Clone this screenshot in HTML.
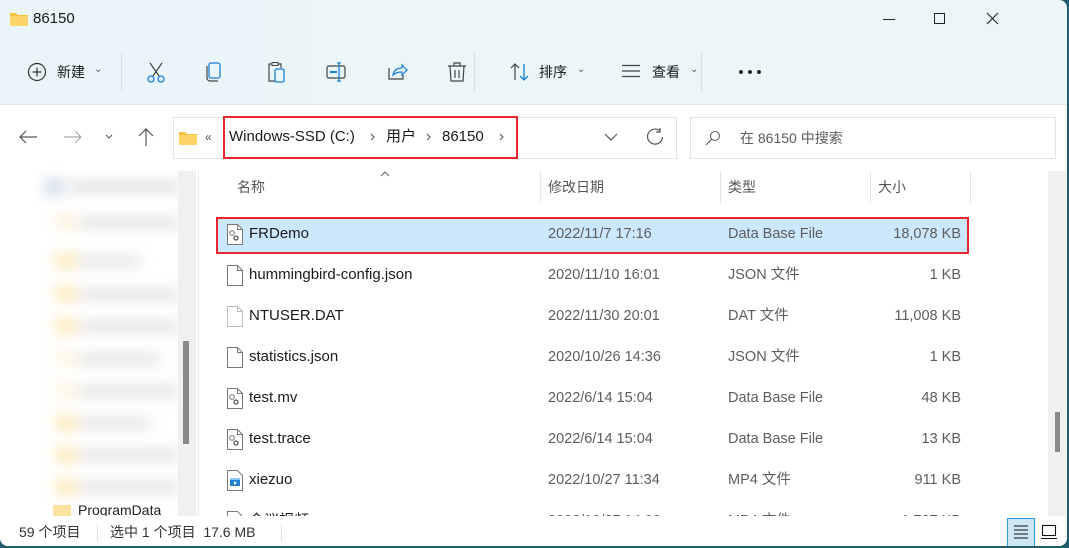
<!DOCTYPE html>
<html><head><meta charset="utf-8"><style>
*{margin:0;padding:0;box-sizing:border-box}
body{width:1069px;height:548px;overflow:hidden;background:#1f5d6b;font-family:"Liberation Sans","Noto Sans CJK SC",sans-serif;position:relative}
.win{position:absolute;left:0;top:0;width:1067px;height:546px;background:#fff;border-radius:0 8px 8px 8px;overflow:hidden}
.top{position:absolute;left:0;top:0;width:100%;height:105px;background:linear-gradient(90deg,#e9f5f9,#eaf6f8 60%,#edf6f9);border-bottom:1px solid #e3e7ea}
.a{position:absolute;white-space:nowrap;line-height:20px}
.t{font-size:14px;color:#1a1a1a}
.g{color:#555}
.sep{position:absolute;width:1px;background:#d9dfe2}
.row{position:absolute;left:217px;width:751px;height:34px}
.r .n{position:absolute;left:32px;top:6px;font-size:15px;color:#1a1a1a;line-height:20px;white-space:nowrap}
.cell{position:absolute;font-size:14.5px;color:#5d5d5d;top:6px;line-height:20px;white-space:nowrap}
.blur{filter:blur(7px)}
</style></head><body>
<div class="win">
<div class="top"></div>
<svg class="a" style="left:10px;top:11px" width="18" height="15"><path d="M0 2h6l2 2h10v11H0z" fill="#f6c33e"/><path d="M0 5h18v10H0z" fill="#fcd46a"/></svg>
<div class="a t" style="left:33px;top:9px;font-size:15px">86150</div>
<div class="a" style="left:883px;top:19px;width:12px;height:1px;background:#222"></div>
<div class="a" style="left:934px;top:13px;width:11px;height:11px;border:1px solid #222"></div>
<svg class="a" style="left:986px;top:12px" width="13" height="13"><path d="M1 1L12 12M12 1L1 12" stroke="#222" stroke-width="1.1"/></svg>
<!-- toolbar -->
<svg class="a" style="left:27px;top:62px" width="20" height="20"><circle cx="10" cy="10" r="8.5" fill="none" stroke="#333" stroke-width="1.2"/><path d="M10 5.5v9M5.5 10h9" stroke="#333" stroke-width="1.2"/></svg>
<div class="a t" style="left:57px;top:62px">新建</div>
<div class="a g" style="left:94px;top:60px;font-size:10px">⌄</div>
<div class="sep" style="left:121px;top:52px;height:40px"></div>
<svg class="a" style="left:145px;top:62px" width="22" height="22"><path d="M5 1l9 13M17 1L8 14" stroke="#444" stroke-width="1.2" fill="none"/><circle cx="6" cy="17" r="3" fill="none" stroke="#1a7fd4" stroke-width="1.3"/><circle cx="16" cy="17" r="3" fill="none" stroke="#1a7fd4" stroke-width="1.3"/></svg>
<svg class="a" style="left:203px;top:61px" width="22" height="22"><rect x="6" y="2" width="11" height="15" rx="2" fill="none" stroke="#1a7fd4" stroke-width="1.3"/><path d="M4 5v12a3 3 0 0 0 3 3h8" fill="none" stroke="#444" stroke-width="1.2"/></svg>
<svg class="a" style="left:265px;top:61px" width="22" height="22"><path d="M7 3H4v17h6" fill="none" stroke="#444" stroke-width="1.2"/><rect x="7" y="1.5" width="6" height="3" fill="none" stroke="#444"/><path d="M13 3h3v4" fill="none" stroke="#444" stroke-width="1.2"/><rect x="10" y="8" width="9" height="13" rx="1.5" fill="none" stroke="#1a7fd4" stroke-width="1.3"/></svg>
<svg class="a" style="left:325px;top:61px" width="24" height="22"><rect x="2" y="5" width="18" height="12" rx="2" fill="none" stroke="#444" stroke-width="1.2"/><path d="M5 11h7" stroke="#1a7fd4" stroke-width="2"/><path d="M14 2v18M12 2h4M12 20h4" stroke="#1a7fd4" stroke-width="1.3"/></svg>
<svg class="a" style="left:386px;top:61px" width="22" height="22"><path d="M3 7v11h14v-4" fill="none" stroke="#444" stroke-width="1.2"/><path d="M7 14c1-5 4-7 9-7V4l5 5-5 5v-3c-4 0-7 1-9 3z" fill="none" stroke="#1a7fd4" stroke-width="1.2"/></svg>
<svg class="a" style="left:446px;top:61px" width="22" height="22"><path d="M2 5h18M8 5V2h6v3M4 5l1 15h12l1-15M9 9v8M13 9v8" fill="none" stroke="#444" stroke-width="1.2"/></svg>
<div class="sep" style="left:474px;top:52px;height:40px"></div>
<svg class="a" style="left:509px;top:62px" width="22" height="20"><path d="M6 18V2M2 6l4-4 4 4" fill="none" stroke="#444" stroke-width="1.2"/><path d="M15 2v16M11 14l4 4 4-4" fill="none" stroke="#1a7fd4" stroke-width="1.3"/></svg>
<div class="a t" style="left:539px;top:62px">排序</div>
<div class="a g" style="left:577px;top:60px;font-size:10px">⌄</div>
<svg class="a" style="left:621px;top:64px" width="20" height="14"><path d="M1 1.5h18M1 7h18M1 12.5h18" stroke="#444" stroke-width="1.2"/></svg>
<div class="a t" style="left:652px;top:62px">查看</div>
<div class="a g" style="left:690px;top:60px;font-size:10px">⌄</div>
<div class="sep" style="left:701px;top:52px;height:40px"></div>
<div class="a" style="left:739px;top:70px;width:25px;height:4px;background:radial-gradient(circle at 2px 2px,#222 1.8px,transparent 2.2px) 0 0/9px 4px repeat-x"></div>
<!-- nav -->
<svg class="a" style="left:18px;top:129px" width="20" height="16"><path d="M19 8H2M8 2L2 8l6 6" fill="none" stroke="#555" stroke-width="1.2"/></svg>
<svg class="a" style="left:63px;top:129px" width="20" height="16"><path d="M1 8h17M12 2l6 6-6 6" fill="none" stroke="#aaa" stroke-width="1.2"/></svg>
<svg class="a" style="left:105px;top:134px" width="8" height="6"><path d="M1 1l3 3 3-3" fill="none" stroke="#555"/></svg>
<svg class="a" style="left:137px;top:127px" width="18" height="20"><path d="M9 19V2M2 9l7-7 7 7" fill="none" stroke="#555" stroke-width="1.2"/></svg>
<div class="a" style="left:173px;top:117px;width:504px;height:42px;border:1px solid #e3e3e3;background:#fff"></div>
<svg class="a" style="left:179px;top:130px" width="18" height="15"><path d="M0 2h6l2 2h10v11H0z" fill="#f6c33e"/><path d="M0 5h18v10H0z" fill="#fcd46a"/></svg>
<div class="a g" style="left:205px;top:127px;font-size:12px">«</div>
<div class="a" style="left:223px;top:116px;width:295px;height:43px;border:2px solid #e8262f"></div>
<div class="a t" style="left:229px;top:127px;font-size:15px">Windows-SSD (C:)</div>
<svg class="a" style="left:370px;top:133px" width="5" height="8"><path d="M1 1l3 3-3 3" fill="none" stroke="#555"/></svg>
<div class="a t" style="left:386px;top:127px;font-size:15px">用户</div>
<svg class="a" style="left:426px;top:133px" width="5" height="8"><path d="M1 1l3 3-3 3" fill="none" stroke="#555"/></svg>
<div class="a t" style="left:442px;top:127px;font-size:15px">86150</div>
<svg class="a" style="left:499px;top:133px" width="5" height="8"><path d="M1 1l3 3-3 3" fill="none" stroke="#555"/></svg>
<svg class="a" style="left:604px;top:132px" width="14" height="10"><path d="M1 2l6 6 6-6" fill="none" stroke="#555" stroke-width="1.2"/></svg>
<svg class="a" style="left:645px;top:127px" width="20" height="20"><path d="M15 4a7.5 7.5 0 1 0 2.5 6" fill="none" stroke="#555" stroke-width="1.2"/><path d="M15 1v4h-4" fill="none" stroke="#555" stroke-width="1.2"/></svg>
<div class="a" style="left:690px;top:117px;width:366px;height:42px;border:1px solid #e3e3e3"></div>
<svg class="a" style="left:705px;top:130px" width="16" height="16"><circle cx="10" cy="6" r="4.5" fill="none" stroke="#666" stroke-width="1.1"/><path d="M7 9l-6 6" stroke="#666" stroke-width="1.2"/></svg>
<div class="a" style="left:740px;top:128px;font-size:14px;color:#5a5a5a">在 86150 中搜索</div>
<!-- nav pane blurred -->
<div class="a blur" style="left:15px;top:170px;width:165px;height:340px">
 <div class="a" style="left:30px;top:10px;width:18px;height:14px;background:#c6d4e4"></div><div class="a" style="left:55px;top:13px;width:110px;height:8px;background:#d4d4d4"></div>
 <div class="a" style="left:40px;top:45px;width:22px;height:14px;background:#fdf2d8"></div><div class="a" style="left:65px;top:48px;width:100px;height:8px;background:#d8d8d8"></div>
 <div class="a" style="left:40px;top:84px;width:22px;height:14px;background:#fde8b4"></div><div class="a" style="left:65px;top:87px;width:60px;height:8px;background:#d8d8d8"></div>
 <div class="a" style="left:40px;top:117px;width:22px;height:14px;background:#fde8b4"></div><div class="a" style="left:65px;top:120px;width:100px;height:8px;background:#d8d8d8"></div>
 <div class="a" style="left:40px;top:149px;width:22px;height:14px;background:#fde8b4"></div><div class="a" style="left:65px;top:152px;width:100px;height:8px;background:#d8d8d8"></div>
 <div class="a" style="left:40px;top:182px;width:22px;height:14px;background:#fdf4dd"></div><div class="a" style="left:65px;top:185px;width:80px;height:8px;background:#d8d8d8"></div>
 <div class="a" style="left:40px;top:214px;width:22px;height:14px;background:#fdf4dd"></div><div class="a" style="left:65px;top:217px;width:100px;height:8px;background:#d8d8d8"></div>
 <div class="a" style="left:40px;top:246px;width:22px;height:14px;background:#fde8b4"></div><div class="a" style="left:65px;top:249px;width:70px;height:8px;background:#d8d8d8"></div>
 <div class="a" style="left:40px;top:278px;width:22px;height:14px;background:#fde8b4"></div><div class="a" style="left:65px;top:281px;width:100px;height:8px;background:#d8d8d8"></div>
 <div class="a" style="left:40px;top:310px;width:22px;height:14px;background:#fde8b4"></div><div class="a" style="left:65px;top:313px;width:100px;height:8px;background:#d8d8d8"></div>
</div>
<div class="a" style="left:53px;top:505px;width:18px;height:12px;background:#fde2a0"></div>
<div class="a" style="left:78px;top:500px;font-size:14px;color:#222;height:16px;overflow:hidden;line-height:20px">ProgramData</div>
<div class="a" style="left:178px;top:171px;width:18px;height:345px;background:#f0f0f0"></div>
<div class="a" style="left:183px;top:341px;width:6px;height:103px;background:#8a8a8a"></div>
<div class="a" style="left:198px;top:171px;width:1px;height:345px;background:#ececec"></div>
<!-- headers -->
<svg class="a" style="left:380px;top:171px" width="10" height="6"><path d="M1 5l4-4 4 4" fill="none" stroke="#666"/></svg>
<div class="a" style="left:237px;top:177px;font-size:14px;color:#555">名称</div>
<div class="a" style="left:548px;top:177px;font-size:14px;color:#555">修改日期</div>
<div class="a" style="left:728px;top:177px;font-size:14px;color:#555">类型</div>
<div class="a" style="left:878px;top:177px;font-size:14px;color:#555">大小</div>
<div class="sep" style="left:540px;top:171px;height:32px;background:#e5e5e5"></div>
<div class="sep" style="left:720px;top:171px;height:32px;background:#e5e5e5"></div>
<div class="sep" style="left:870px;top:171px;height:32px;background:#e5e5e5"></div>
<div class="sep" style="left:970px;top:171px;height:32px;background:#e5e5e5"></div>
<!-- rows -->
<div class="a" style="left:216px;top:217px;width:753px;height:37px;border:2px solid #e8262f"></div>
<div class="a" style="left:218px;top:219px;width:749px;height:33px;background:#cce8ff"></div>
<div id="rows"></div>
<!-- right scrollbar -->
<div class="a" style="left:1048px;top:171px;width:18px;height:345px;background:#f0f0f0"></div>
<div class="a" style="left:1055px;top:412px;width:5px;height:40px;background:#8a8a8a"></div>
<!-- status -->
<div class="a" style="left:0;top:516px;width:1067px;height:32px;background:#fff"></div>
<div class="a" style="left:19px;top:522px;font-size:14px;color:#333">59 个项目</div>
<div class="sep" style="left:97px;top:524px;height:18px;background:#e3e3e3"></div>
<div class="a" style="left:110px;top:522px;font-size:14px;color:#333">选中 1 个项目&nbsp; 17.6 MB</div>
<div class="sep" style="left:281px;top:524px;height:18px;background:#e3e3e3"></div>
<div class="a" style="left:1007px;top:518px;width:28px;height:29px;border:1px solid #2a9be0;background:#cfe6f5"></div>
<svg class="a" style="left:1013px;top:525px" width="16" height="14"><path d="M1 1h14M1 5h14M1 9h14M1 13h14" stroke="#111" stroke-width="1.1"/></svg>
<svg class="a" style="left:1041px;top:524px" width="16" height="16"><rect x="1.5" y="1.5" width="13" height="10" fill="none" stroke="#111" stroke-width="1.1"/><path d="M0 14.5h16" stroke="#111"/></svg>
</div>
<script>
var gear='<svg width="16" height="21" style="position:absolute;left:10px;top:6px"><path d="M0.5 0.5h10l5 5v15h-15z" fill="#fff" stroke="#777"/><path d="M10.5 0.5v5h5" fill="none" stroke="#777"/><circle cx="5" cy="9" r="2.3" fill="none" stroke="#999" stroke-width="1.4"/><circle cx="9" cy="14" r="2" fill="none" stroke="#555" stroke-width="1.3"/></svg>';
var blank=function(c){return '<svg width="16" height="21" style="position:absolute;left:10px;top:6px"><path d="M0.5 0.5h10l5 5v15h-15z" fill="#fff" stroke="'+c+'"/><path d="M10.5 0.5v5h5" fill="none" stroke="'+c+'"/></svg>'};
var mp4='<svg width="16" height="21" style="position:absolute;left:10px;top:6px"><path d="M0.5 0.5h10l5 5v15h-15z" fill="#fff" stroke="#777"/><rect x="3" y="8" width="10" height="8" fill="#1f7fd0"/><rect x="3" y="8" width="10" height="2" fill="#8cc6f0"/><path d="M7 11v4l3-2z" fill="#fff"/></svg>';
var d=[[gear,"FRDemo","2022/11/7 17:16","Data Base File","18,078 KB"],
[blank("#777"),"hummingbird-config.json","2020/11/10 16:01","JSON 文件","1 KB"],
[blank("#bbb"),"NTUSER.DAT","2022/11/30 20:01","DAT 文件","11,008 KB"],
[blank("#777"),"statistics.json","2020/10/26 14:36","JSON 文件","1 KB"],
[gear,"test.mv","2022/6/14 15:04","Data Base File","48 KB"],
[gear,"test.trace","2022/6/14 15:04","Data Base File","13 KB"],
[mp4,"xiezuo","2022/10/27 11:34","MP4 文件","911 KB"],
[mp4,"会议视频","2022/10/27 14:00","MP4 文件","1,727 KB"]];
var h='';
d.forEach(function(r,i){var y=218+i*41;
h+='<div class="row r" style="top:'+y+'px">'+r[0]+'<div class="n">'+r[1]+'</div><div class="cell" style="left:331px">'+r[2]+'</div><div class="cell" style="left:511px">'+r[3]+'</div><div class="cell" style="right:7px">'+r[4]+'</div></div>';});
document.getElementById('rows').outerHTML=h;
</script>
</body></html>
